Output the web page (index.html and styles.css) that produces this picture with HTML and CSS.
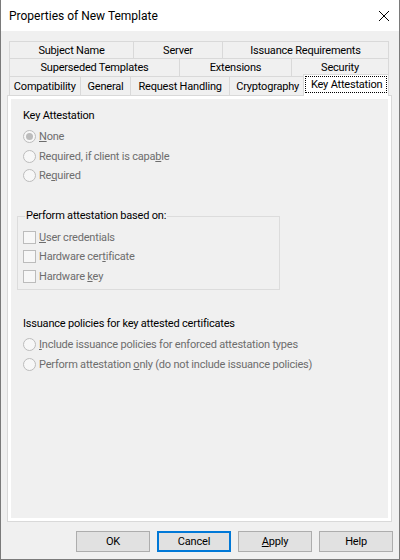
FILE: index.html
```html
<!DOCTYPE html>
<html>
<head>
<meta charset="utf-8">
<link rel="stylesheet" href="styles.css">
</head>
<body>
<div class="window">
  <div class="titlebar">
    <span class="title">Properties of New Template</span>
    <svg class="close" width="12" height="12" viewBox="0 0 12 12"><path d="M1 1 L11 11 M11 1 L1 11" stroke="#000" stroke-width="1" fill="none"/></svg>
  </div>
  <div class="body">
    <div class="tabs">
      <div class="tabrow row1">
        <div class="tab w-subject">Subject Name</div>
        <div class="tab w-server">Server</div>
        <div class="tab w-issreq">Issuance Requirements</div>
      </div>
      <div class="tabrow row2">
        <div class="tab w-super">Superseded Templates</div>
        <div class="tab w-ext">Extensions</div>
        <div class="tab w-sec">Security</div>
      </div>
      <div class="tabrow row3">
        <div class="tab w-compat">Compatibility</div>
        <div class="tab w-general">General</div>
        <div class="tab w-req">Request Handling</div>
        <div class="tab w-crypto">Cryptography</div>
        <div class="tab selected"><span class="focus">Key Attestation</span></div>
      </div>
    </div>
    <div class="panel">
      <div class="page">
        <div class="heading">Key Attestation</div>
        <div class="options first-options">
          <div class="opt"><span class="radio checked"></span><span class="lbl"><u>N</u>one</span></div>
          <div class="opt"><span class="radio"></span><span class="lbl">Required, if client is capa<u>b</u>le</span></div>
          <div class="opt"><span class="radio"></span><span class="lbl">Re<u>q</u>uired</span></div>
        </div>
        <fieldset class="group">
          <legend>Perform attestation based on:</legend>
          <div class="opt"><span class="check"></span><span class="lbl"><u>U</u>ser credentials</span></div>
          <div class="opt"><span class="check"></span><span class="lbl">Hardware cer<u>t</u>ificate</span></div>
          <div class="opt"><span class="check"></span><span class="lbl">Hardware <u>k</u>ey</span></div>
        </fieldset>
        <div class="heading heading2">Issuance policies for key attested certificates</div>
        <div class="options">
          <div class="opt"><span class="radio"></span><span class="lbl"><u>I</u>nclude issuance policies for enforced attestation types</span></div>
          <div class="opt"><span class="radio"></span><span class="lbl">Perform attestation <u>o</u>nly (do not include issuance policies)</span></div>
        </div>
      </div>
    </div>
    <div class="buttons">
      <div class="btn">OK</div>
      <div class="btn default">Cancel</div>
      <div class="btn"><u>A</u>pply</div>
      <div class="btn">Help</div>
    </div>
  </div>
</div>
</body>
</html>
```
FILE: styles.css
```css
* { box-sizing: border-box; }
html, body { margin: 0; padding: 0; background: #f0f0f0; }
.window {
  width: 400px;
  height: 560px;
  border: 1px solid #7a7a7a;
  border-top: none;
  background: #f0f0f0;
  display: flex;
  flex-direction: column;
  font-family: Roboto, "Liberation Sans", sans-serif;
  font-size: 11px;
  letter-spacing: -0.2px;
  color: #000;
}
.titlebar {
  height: 31px;
  flex: 0 0 31px;
  background: #fff;
  display: flex;
  align-items: center;
  justify-content: space-between;
  padding: 0 9px 0 8px;
}
.title { font-size: 12px; letter-spacing: 0; }
.close { display: block; margin-top: 1px; }
.body {
  flex: 1;
  display: flex;
  flex-direction: column;
  padding: 10px 7px 0 6px;
}
.tabs { padding: 0 3px 0 2px; display: flex; flex-direction: column; }
.tabrow { display: flex; align-items: flex-end; }
.row1 { height: 17px; }
.row2 { height: 18px; }
.row3 { height: 19px; }
.tab {
  height: 100%;
  border: 1px solid #d9d9d9;
  border-bottom: none;
  margin-left: -1px;
  display: flex;
  align-items: center;
  justify-content: center;
  white-space: nowrap;
  background: #f0f0f0;
}
.tab:first-child { margin-left: 0; }
.w-subject { width: 125px; }
.w-server { width: 90px; }
.w-issreq { width: 167px; }
.w-super { width: 171px; }
.w-ext { width: 113px; }
.w-sec { width: 98px; }
.w-compat { width: 72px; }
.w-general { width: 52px; }
.w-req { width: 100px; }
.w-crypto { width: 78px; }
.tab.selected {
  width: 86px;
  height: 22px;
  margin-left: -3px;
  margin-bottom: -1px;
  background: #fff;
  position: relative;
  z-index: 2;
  padding-bottom: 2px;
}
.focus {
  outline: 1px dotted #000;
  padding: 0 4px 0 5px;
  line-height: 15px;
}
.panel {
  height: 427px;
  border: 1px solid #d9d9d9;
  background: #fff;
  padding: 3px;
  display: flex;
  flex-direction: column;
}
.page {
  flex: 1;
  background: #f0f0f0;
  padding: 9px 0 0 12px;
  display: flex;
  flex-direction: column;
  align-items: flex-start;
}
.heading { line-height: 16px; height: 16px; }
.heading2 { margin-top: 26px; }
.options { margin-top: 3px; display: flex; flex-direction: column; }
.opt {
  height: 19.5px;
  display: flex;
  align-items: center;
  gap: 3px;
  color: #6d6d6d;
  white-space: nowrap;
}
.radio {
  width: 13px;
  height: 13px;
  border: 1px solid #bcbcbc;
  border-radius: 50%;
  background: #f7f7f7;
  display: flex;
  align-items: center;
  justify-content: center;
  flex: 0 0 13px;
}
.radio.checked::after {
  content: "";
  width: 7px;
  height: 7px;
  border-radius: 50%;
  background: #bcbcbc;
}
.check {
  width: 13px;
  height: 13px;
  border: 1px solid #bcbcbc;
  background: #f7f7f7;
  flex: 0 0 13px;
}
.group {
  margin: 22.5px 0 0 -6px;
  width: 263px;
  border: 1px solid #dcdcdc;
  padding: 3.25px 0 3.25px 5px;
  min-width: 0;
}
.group legend {
  padding: 0 1px;
  margin-left: 2px;
  line-height: 16px;
  color: #000;
}
.lbl u, .btn u { text-decoration: underline; text-underline-offset: 1px; }
.buttons {
  margin-top: 9px;
  margin-right: -1px;
  display: flex;
  justify-content: flex-end;
  gap: 7px;
}
.btn {
  width: 74px;
  height: 21px;
  background: #e1e1e1;
  border: 1px solid #adadad;
  display: flex;
  align-items: center;
  justify-content: center;
}
.btn.default { border: 2px solid #0078d7; }
```
